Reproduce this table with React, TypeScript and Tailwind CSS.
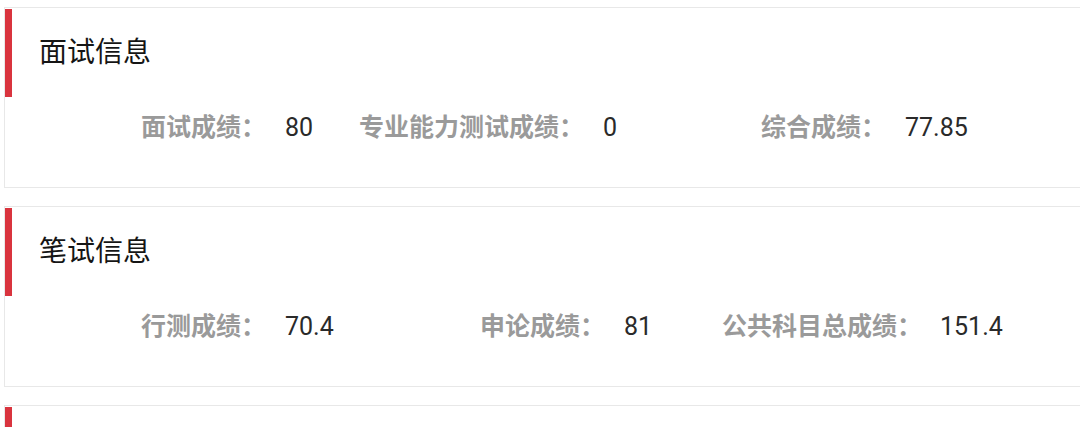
const sections = [
  {
    title: '面试信息',
    cols: 'grid-cols-[144px_74px_244px_158px_144px_1fr]',
    items: [
      { label: '面试成绩：', value: '80' },
      { label: '专业能力测试成绩：', value: '0' },
      { label: '综合成绩：', value: '77.85' },
    ],
  },
  {
    title: '笔试信息',
    cols: 'grid-cols-[144px_195px_144px_98px_218px_1fr]',
    items: [
      { label: '行测成绩：', value: '70.4' },
      { label: '申论成绩：', value: '81' },
      { label: '公共科目总成绩：', value: '151.4' },
    ],
  },
  {
    title: '',
    cols: 'grid-cols-[144px_1fr]',
    items: [],
  },
];

const App = () => {
  return (
    <div className="h-[427px] overflow-hidden bg-white pt-[7px] font-['Roboto','Noto_Sans_CJK_SC',sans-serif]">
      {sections.map((s, i) => (
        <div
          key={i}
          className="ml-[4px] -mr-4 mb-[18px] h-[181px] border border-[#e8e8e8] bg-white"
        >
          <div className="flex h-[90px] items-center">
            <div className="h-[88px] w-[7px] bg-[#d9343e]" />
            <h2 className="ml-[27px] text-[28px] leading-none text-[#151515]">{s.title}</h2>
          </div>
          <div className={`mt-[10px] grid h-[40px] items-center pl-[136px] text-[25px] ${s.cols}`}>
            {s.items.map((it) => (
              <div key={it.label} className="contents">
                <span className="whitespace-nowrap font-bold text-[#9a9a9a]">{it.label}</span>
                <span className="whitespace-nowrap text-[#2a2a2a]">{it.value}</span>
              </div>
            ))}
          </div>
        </div>
      ))}
    </div>
  );
};

export default App;
